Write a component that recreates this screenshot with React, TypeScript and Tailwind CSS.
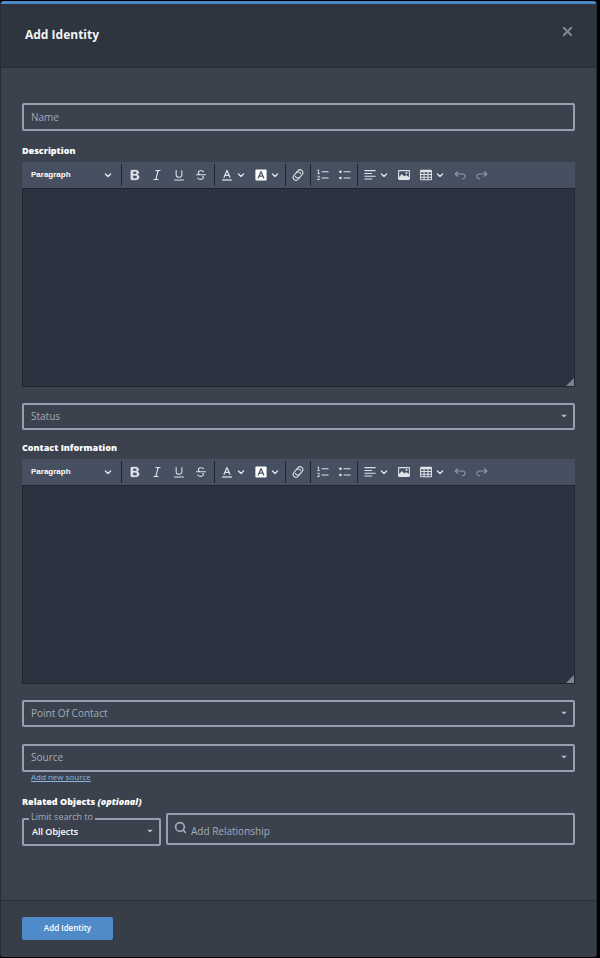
import { useId, type ReactNode } from "react";
import { Search, X } from "lucide-react";

const PATHS = {
  bold: "M10.187 17H5.773c-.637 0-1.092-.138-1.364-.415-.273-.277-.409-.718-.409-1.323V4.738c0-.617.14-1.062.419-1.332.279-.27.73-.406 1.354-.406h4.68c.69 0 1.288.041 1.793.124.506.083.96.242 1.36.478.341.197.644.447.906.75a3.262 3.262 0 0 1 .808 2.162c0 1.401-.722 2.426-2.167 3.075C15.05 10.175 16 11.315 16 13.01a3.756 3.756 0 0 1-2.296 3.504 6.1 6.1 0 0 1-1.517.377c-.571.073-1.238.11-2 .11zm-.217-6.217H7v4.087h3.069c1.977 0 2.965-.69 2.965-2.072 0-.707-.256-1.22-.768-1.537-.512-.319-1.277-.478-2.296-.478zM7 5.13v3.619h2.606c.729 0 1.292-.067 1.69-.2a1.6 1.6 0 0 0 .91-.765c.165-.267.247-.566.247-.897 0-.707-.26-1.176-.778-1.409-.519-.232-1.31-.348-2.375-.348H7z",
  italic:
    "m9.586 14.633.021.004c-.036.335.095.655.393.962.082.083.173.15.274.201h1.474a.6.6 0 1 1 0 1.2H5.304a.6.6 0 0 1 0-1.2h1.15c.474-.07.809-.182 1.005-.334.157-.122.291-.32.404-.597l2.416-9.55a1.053 1.053 0 0 0-.281-.823 1.12 1.12 0 0 0-.442-.296H8.15a.6.6 0 0 1 0-1.2h6.443a.6.6 0 1 1 0 1.2h-1.195c-.376.056-.65.155-.823.296-.215.175-.423.439-.623.79l-2.366 9.347z",
  underline:
    "M3 18v-1.5h14V18zm2.2-8V3.6c0-.4.4-.6.8-.6.3 0 .7.2.7.6v6.2c0 2 1.3 2.8 3.2 2.8 1.9 0 3.4-.9 3.4-2.9V3.6c0-.3.4-.5.8-.5.3 0 .7.2.7.5V10c0 2.7-2.2 4-4.9 4-2.6 0-4.7-1.2-4.7-4z",
  strike:
    "M7 16.4c-.8-.4-1.5-.9-2.2-1.5a.6.6 0 0 1-.2-.5l.3-.6h1c1 1.2 2.1 1.7 3.7 1.7 1 0 1.8-.3 2.3-.6.6-.4.6-1.2.6-1.3.2-1.2-.9-2.1-.9-2.1h2.1c.3.7.4 1.2.4 1.7v.8l-.6 1.2c-.6.8-1.1 1-1.6 1.2a6 6 0 0 1-2.4.6c-1 0-1.8-.3-2.5-.6zM6.8 9 6 8.3c-.4-.5-.5-.8-.5-1.6 0-.7.1-1.3.5-1.8.4-.6 1-1 1.6-1.3a6.3 6.3 0 0 1 4.7 0 4 4 0 0 1 1.7 1l.3.7c0 .1.2.4-.2.7-.4.2-.9.1-1 0a3 3 0 0 0-1.2-1c-.4-.2-1-.3-2-.4-.7 0-1.4.2-2 .6-.8.6-1 .8-1 1.5 0 .8.5 1 1.2 1.5.6.4 1.1.7 1.9 1H6.8zM3 10.5V9h14v1.5z",
  undo: "m5.042 9.367 2.189 1.837a.75.75 0 0 1-.965 1.149l-3.788-3.18a.747.747 0 0 1-.21-.284.75.75 0 0 1 .17-.945L6.23 4.762a.75.75 0 1 1 .964 1.15L4.863 7.866h8.917A.75.75 0 0 1 14 7.9a4 4 0 1 1-1.477 7.718l.344-1.489a2.5 2.5 0 1 0 1.094-4.73l.008-.032H5.042z",
};

function Glyph({ children }: { children: ReactNode }) {
  return (
    <svg viewBox="0 0 20 20" className="size-3.5 shrink-0 fill-current" aria-hidden="true">
      {children}
    </svg>
  );
}

function Chevron() {
  return (
    <svg viewBox="0 0 10 10" className="size-2 shrink-0" fill="none" stroke="currentColor" strokeWidth="1.700" strokeLinecap="round" strokeLinejoin="round" aria-hidden="true">
      <path d="M1.800 3.700 5 6.800l3.200-3.100" />
    </svg>
  );
}

function Caret() {
  return (
    <svg viewBox="0 0 6 3" className="pointer-events-none absolute top-1/2 right-2 h-[3px] w-1.5 -translate-y-1/2 fill-[#b4c0cd]" aria-hidden="true">
      <path d="M0 0h6L3 3z" />
    </svg>
  );
}

function Tool({ label, children, dim }: { label: string; children: ReactNode; dim?: boolean }) {
  return (
    <button
      type="button"
      aria-label={label}
      className={`flex h-full w-[22px] shrink-0 items-center justify-center ${dim ? "text-[#929ba7]" : "text-[#dfe3e8]"}`}
    >
      <Glyph>{children}</Glyph>
    </button>
  );
}

function MenuTool({ label, children }: { label: string; children: ReactNode }) {
  return (
    <button type="button" aria-label={label} className="flex h-full w-[34px] shrink-0 items-center gap-[3px] pl-1 text-[#dfe3e8]">
      <Glyph>{children}</Glyph>
      <Chevron />
    </button>
  );
}

function Group({ children }: { children: ReactNode }) {
  return <div className="flex h-full items-center pr-px pl-px">{children}</div>;
}

function Divider() {
  return <span className="h-[22px] w-px shrink-0 bg-[#1f2630]" />;
}

function RichEditor({ label }: { label: string }) {
  const id = useId();
  return (
    <div>
      <label htmlFor={id} className="mt-3 mb-1 block text-[9px] leading-[14px] font-extrabold text-white">
        {label}
      </label>
      <div className="flex h-[26px] items-center overflow-hidden bg-[#465060]">
        <div className="relative flex h-full w-[99px] shrink-0 items-center text-[#e4e8ec]">
          <select aria-label="Text style" className="h-full w-full appearance-none pl-[9px] font-['Liberation_Sans',sans-serif] text-[8px] font-bold text-white outline-none">
            <option>Paragraph</option>
            <option>Heading 1</option>
          </select>
          <span className="pointer-events-none absolute right-[9px]">
            <Chevron />
          </span>
        </div>
        <Divider />
        <div className="flex h-full items-center px-0.5">
          <Tool label="Bold">
            <path d={PATHS.bold} stroke="currentColor" strokeWidth="0.6" />
          </Tool>
          <Tool label="Italic">
            <path d={PATHS.italic} />
          </Tool>
          <Tool label="Underline">
            <path d={PATHS.underline} />
          </Tool>
          <Tool label="Strikethrough">
            <path d={PATHS.strike} />
          </Tool>
        </div>
        <Divider />
        <Group>
          <MenuTool label="Font color">
            <path d="m5.500 14 4.500-10.500L14.500 14M7.200 10.600h5.600" fill="none" stroke="currentColor" strokeWidth="1.700" strokeLinejoin="round" />
            <path d="M3 16.200h14v1.800H3z" />
          </MenuTool>
          <MenuTool label="Font background color">
            <rect x="2" y="2" width="16" height="16" rx="1.500" fill="#fff" />
            <path d="m5.800 15 4.200-10 4.200 10M7.500 11.500h5" fill="none" stroke="#465060" strokeWidth="1.700" strokeLinejoin="round" />
          </MenuTool>
        </Group>
        <Divider />
        <Group>
          <Tool label="Link">
            <g transform="rotate(-50 10 10)" fill="none" stroke="currentColor" strokeWidth="1.500" strokeLinecap="round">
              <path d="M8 14H5.500a4 4 0 0 1 0-8h5a4 4 0 0 1 3.700 5.500" />
              <path d="M12 6h2.500a4 4 0 0 1 0 8h-5a4 4 0 0 1-3.700-5.500" />
            </g>
          </Tool>
        </Group>
        <Divider />
        <Group>
          <Tool label="Numbered list">
            <path d="M8 4.500h10V6H8zM8 13.500h10V15H8z" />
            <path d="M2 3.500 3.700 2.500V8M2 8h3.400M2 12.200c1-1 3-.7 3 .6 0 1.200-2 2.200-3 3.700h3.400" fill="none" stroke="currentColor" strokeWidth="1.300" />
          </Tool>
          <Tool label="Bulleted list">
            <path d="M8 4.500h10V6H8zM8 13.500h10V15H8z" />
            <circle cx="3.500" cy="5.300" r="1.900" />
            <circle cx="3.500" cy="14.300" r="1.900" />
          </Tool>
        </Group>
        <Divider />
        <Group>
          <MenuTool label="Text alignment">
            <path d="M2 3h16v1.500H2zM2 7h11v1.500H2zM2 11h16v1.500H2zM2 15h11v1.500H2z" />
          </MenuTool>
          <Tool label="Insert image">
            <path fillRule="evenodd" d="M3 3h14a1.500 1.500 0 0 1 1.500 1.500v11A1.500 1.500 0 0 1 17 17H3a1.500 1.500 0 0 1-1.500-1.500v-11A1.500 1.500 0 0 1 3 3zm0 1.600v8.400l4-4.500 3.500 3.500 2.500-2 4 3V4.600z" />
            <circle cx="13.500" cy="7.200" r="1.500" />
          </Tool>
          <MenuTool label="Insert table">
            <path fillRule="evenodd" d="M3 2.500h14A1.500 1.500 0 0 1 18.500 4v12a1.500 1.500 0 0 1-1.500 1.500H3A1.500 1.500 0 0 1 1.500 16V4A1.500 1.500 0 0 1 3 2.500zM3 6v2.500h3.500V6zm5 0v2.500h4V6zm5.500 0v2.500H17V6zM3 10v2.500h3.500V10zm5 0v2.500h4V10zm5.500 0v2.500H17V10zM3 14v2.200h3.500V14zm5 0v2.200h4V14zm5.500 0v2.200H17V14z" />
          </MenuTool>
          <Tool label="Undo" dim>
            <path d={PATHS.undo} />
          </Tool>
          <Tool label="Redo" dim>
            <path d={PATHS.undo} transform="matrix(-1 0 0 1 20 0)" />
          </Tool>
        </Group>
      </div>
      <div className="relative">
        <textarea id={id} className="block h-[199px] w-full resize-none border border-[#1f2630] bg-[#2c3240] p-2 text-[10px] text-white outline-none" />
        <svg viewBox="0 0 8 8" className="pointer-events-none absolute right-px bottom-px size-2 fill-[#7b8492]" aria-hidden="true">
          <path d="M8 0v8H0z" />
        </svg>
      </div>
    </div>
  );
}

function SelectField({ label, className }: { label: string; className: string }) {
  return (
    <div className={`relative ${className}`}>
      <select
        aria-label={label}
        className="h-full w-full appearance-none rounded-[2px] border-2 border-[#95a1b1] bg-transparent pl-[7px] text-[10px] text-[#a0acba] outline-none"
      >
        <option>{label}</option>
      </select>
      <Caret />
    </div>
  );
}

export default function App() {
  return (
    <div className="min-h-screen bg-black pt-px pr-[3px] pb-px font-['Open_Sans','Noto_Sans',sans-serif]">
      <form className="rounded-[3px] border-x border-[#272e38] bg-[#3b424d]" onSubmit={(e) => e.preventDefault()}>
        <header className="flex h-[67px] items-center justify-between rounded-t-[3px] border-t-[3px] border-b border-t-[#4b88c8] border-b-[#272e38] bg-[#2e353f] pr-[21px] pb-0.5 pl-6">
          <h1 className="text-[12px] leading-4 font-bold text-[#f2f3f4]">Add Identity</h1>
          <button type="button" aria-label="Close" className="mb-1.5 text-[#7f8896]">
            <X size={15} strokeWidth={3} />
          </button>
        </header>

        <main className="px-[21px] pt-[35px] pb-[55px]">
          <input
            aria-label="Name"
            placeholder="Name"
            className="mb-[13px] block h-7 w-full rounded-[2px] border-2 border-[#95a1b1] bg-transparent px-[7px] text-[10px] text-white outline-none placeholder:text-[#a0acba]"
          />
          <RichEditor label="Description" />
          <SelectField label="Status" className="mt-[15px] h-[27px]" />
          <RichEditor label="Contact Information" />
          <SelectField label="Point Of Contact" className="mt-[15px] h-[27px]" />
          <SelectField label="Source" className="mt-[17px] h-7" />
          <div className="flex h-3 items-center pl-[9px]">
            <a href="#new-source" className="text-[8px] leading-3 text-[#8bb8e2] underline">
              Add new source
            </a>
          </div>

          <h2 className="mt-3 mb-1 text-[9px] leading-[14px] font-extrabold text-white">
            Related Objects <em>(optional)</em>
          </h2>
          <div className="flex items-end gap-[5px]">
            <div className="relative h-7 w-[139px] shrink-0">
              <label htmlFor="limit" className="absolute -top-[5px] left-[7px] bg-[#3b424d] px-0.5 text-[9px] leading-[10px] text-[#a0acba]">
                Limit search to
              </label>
              <select id="limit" className="h-full w-full appearance-none rounded-[2px] border-2 border-[#95a1b1] pl-2 text-[9px] font-semibold text-white outline-none">
                <option>All Objects</option>
              </select>
              <Caret />
            </div>
            <div className="flex h-8 min-w-0 flex-1 items-center gap-1 rounded-[2px] border-2 border-[#95a1b1] px-[6px]">
              <Search size={13} strokeWidth={3} className="mb-1 shrink-0 text-[#a0acba]" />
              <input aria-label="Add Relationship" placeholder="Add Relationship" className="min-w-0 flex-1 pt-1 text-[10px] text-white outline-none placeholder:text-[#a0acba]" />
            </div>
          </div>
        </main>

        <footer className="rounded-b-[3px] border-t border-[#272e38] bg-[#373e47] px-[21px] pt-4 pb-[17px]">
          <button type="submit" className="block h-[23px] w-[91px] rounded-[2px] bg-[#4f8bc9] pb-0.5 text-[8px] font-semibold text-white">
            Add Identity
          </button>
        </footer>
      </form>
    </div>
  );
}
